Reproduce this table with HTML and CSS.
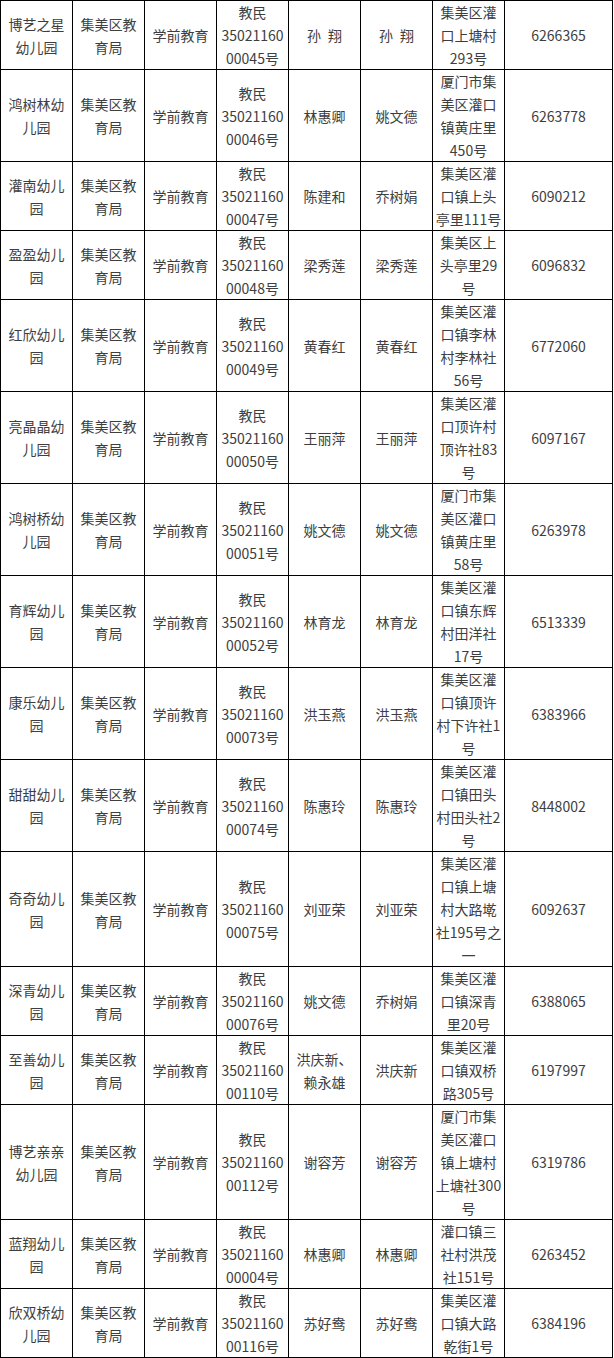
FILE: index.html
```html
<!DOCTYPE html>
<html lang="zh-CN">
<head>
<meta charset="utf-8">
<title>幼儿园名录</title>
<link rel="stylesheet" href="styles.css">
</head>
<body>
<table class="list">
  <colgroup>
    <col class="c-n"><col class="c-n"><col class="c-n"><col class="c-n"><col class="c-n"><col class="c-n"><col class="c-n"><col class="c-w">
  </colgroup>
  <tbody>
    <tr><td><div class="t">博艺之星幼儿园</div></td><td><div class="t">集美区教育局</div></td><td><div class="t">学前教育</div></td><td><div class="t">教民3502116000045号</div></td><td><div class="t">孙&ensp;翔</div></td><td><div class="t">孙&ensp;翔</div></td><td><div class="t">集美区灌口上塘村293号</div></td><td><div class="t">6266365</div></td></tr>
    <tr><td><div class="t">鸿树林幼儿园</div></td><td><div class="t">集美区教育局</div></td><td><div class="t">学前教育</div></td><td><div class="t">教民3502116000046号</div></td><td><div class="t">林惠卿</div></td><td><div class="t">姚文德</div></td><td><div class="t">厦门市集美区灌口镇黄庄里450号</div></td><td><div class="t">6263778</div></td></tr>
    <tr><td><div class="t">灌南幼儿园</div></td><td><div class="t">集美区教育局</div></td><td><div class="t">学前教育</div></td><td><div class="t">教民3502116000047号</div></td><td><div class="t">陈建和</div></td><td><div class="t">乔树娟</div></td><td><div class="t">集美区灌口镇上头亭里111号</div></td><td><div class="t">6090212</div></td></tr>
    <tr><td><div class="t">盈盈幼儿园</div></td><td><div class="t">集美区教育局</div></td><td><div class="t">学前教育</div></td><td><div class="t">教民3502116000048号</div></td><td><div class="t">梁秀莲</div></td><td><div class="t">梁秀莲</div></td><td><div class="t">集美区上头亭里29号</div></td><td><div class="t">6096832</div></td></tr>
    <tr><td><div class="t">红欣幼儿园</div></td><td><div class="t">集美区教育局</div></td><td><div class="t">学前教育</div></td><td><div class="t">教民3502116000049号</div></td><td><div class="t">黄春红</div></td><td><div class="t">黄春红</div></td><td><div class="t">集美区灌口镇李林村李林社56号</div></td><td><div class="t">6772060</div></td></tr>
    <tr><td><div class="t">亮晶晶幼儿园</div></td><td><div class="t">集美区教育局</div></td><td><div class="t">学前教育</div></td><td><div class="t">教民3502116000050号</div></td><td><div class="t">王丽萍</div></td><td><div class="t">王丽萍</div></td><td><div class="t">集美区灌口顶许村顶许社83号</div></td><td><div class="t">6097167</div></td></tr>
    <tr><td><div class="t">鸿树桥幼儿园</div></td><td><div class="t">集美区教育局</div></td><td><div class="t">学前教育</div></td><td><div class="t">教民3502116000051号</div></td><td><div class="t">姚文德</div></td><td><div class="t">姚文德</div></td><td><div class="t">厦门市集美区灌口镇黄庄里58号</div></td><td><div class="t">6263978</div></td></tr>
    <tr><td><div class="t">育辉幼儿园</div></td><td><div class="t">集美区教育局</div></td><td><div class="t">学前教育</div></td><td><div class="t">教民3502116000052号</div></td><td><div class="t">林育龙</div></td><td><div class="t">林育龙</div></td><td><div class="t">集美区灌口镇东辉村田洋社17号</div></td><td><div class="t">6513339</div></td></tr>
    <tr><td><div class="t">康乐幼儿园</div></td><td><div class="t">集美区教育局</div></td><td><div class="t">学前教育</div></td><td><div class="t">教民3502116000073号</div></td><td><div class="t">洪玉燕</div></td><td><div class="t">洪玉燕</div></td><td><div class="t">集美区灌口镇顶许村下许社1号</div></td><td><div class="t">6383966</div></td></tr>
    <tr><td><div class="t">甜甜幼儿园</div></td><td><div class="t">集美区教育局</div></td><td><div class="t">学前教育</div></td><td><div class="t">教民3502116000074号</div></td><td><div class="t">陈惠玲</div></td><td><div class="t">陈惠玲</div></td><td><div class="t">集美区灌口镇田头村田头社2号</div></td><td><div class="t">8448002</div></td></tr>
    <tr><td><div class="t">奇奇幼儿园</div></td><td><div class="t">集美区教育局</div></td><td><div class="t">学前教育</div></td><td><div class="t">教民3502116000075号</div></td><td><div class="t">刘亚荣</div></td><td><div class="t">刘亚荣</div></td><td><div class="t">集美区灌口镇上塘村大路墘社195号之一</div></td><td><div class="t">6092637</div></td></tr>
    <tr><td><div class="t">深青幼儿园</div></td><td><div class="t">集美区教育局</div></td><td><div class="t">学前教育</div></td><td><div class="t">教民3502116000076号</div></td><td><div class="t">姚文德</div></td><td><div class="t">乔树娟</div></td><td><div class="t">集美区灌口镇深青里20号</div></td><td><div class="t">6388065</div></td></tr>
    <tr><td><div class="t">至善幼儿园</div></td><td><div class="t">集美区教育局</div></td><td><div class="t">学前教育</div></td><td><div class="t">教民3502116000110号</div></td><td><div class="t">洪庆新、赖永雄</div></td><td><div class="t">洪庆新</div></td><td><div class="t">集美区灌口镇双桥路305号</div></td><td><div class="t">6197997</div></td></tr>
    <tr><td><div class="t">博艺亲亲幼儿园</div></td><td><div class="t">集美区教育局</div></td><td><div class="t">学前教育</div></td><td><div class="t">教民3502116000112号</div></td><td><div class="t">谢容芳</div></td><td><div class="t">谢容芳</div></td><td><div class="t">厦门市集美区灌口镇上塘村上塘社300号</div></td><td><div class="t">6319786</div></td></tr>
    <tr><td><div class="t">蓝翔幼儿园</div></td><td><div class="t">集美区教育局</div></td><td><div class="t">学前教育</div></td><td><div class="t">教民3502116000004号</div></td><td><div class="t">林惠卿</div></td><td><div class="t">林惠卿</div></td><td><div class="t">灌口镇三社村洪茂社151号</div></td><td><div class="t">6263452</div></td></tr>
    <tr><td><div class="t">欣双桥幼儿园</div></td><td><div class="t">集美区教育局</div></td><td><div class="t">学前教育</div></td><td><div class="t">教民3502116000116号</div></td><td><div class="t">苏好鸯</div></td><td><div class="t">苏好鸯</div></td><td><div class="t">集美区灌口镇大路乾街1号</div></td><td><div class="t">6384196</div></td></tr>
  </tbody>
</table>
</body>
</html>
```

FILE: styles.css
```css
html, body {
  margin: 0;
  padding: 0;
  background: #ffffff;
}

body {
  font-family: "Noto Sans CJK SC", "Noto Sans", sans-serif;
  font-size: 14px;
  color: #3e3e3e;
}

.list {
  width: 613px;
  table-layout: fixed;
  border-collapse: separate;
  border-spacing: 0;
  border-top: 1px solid #000;
  border-left: 1px solid #000;
}

.c-n {
  width: 72px;
}

.c-w {
  width: 108px;
}

.list td {
  padding: 0 2px;
  border-right: 1px solid #000;
  border-bottom: 1px solid #000;
  text-align: center;
  vertical-align: middle;
  line-height: 23px;
  overflow-wrap: break-word;
}

.t {
  margin-bottom: -1px;
}
```
